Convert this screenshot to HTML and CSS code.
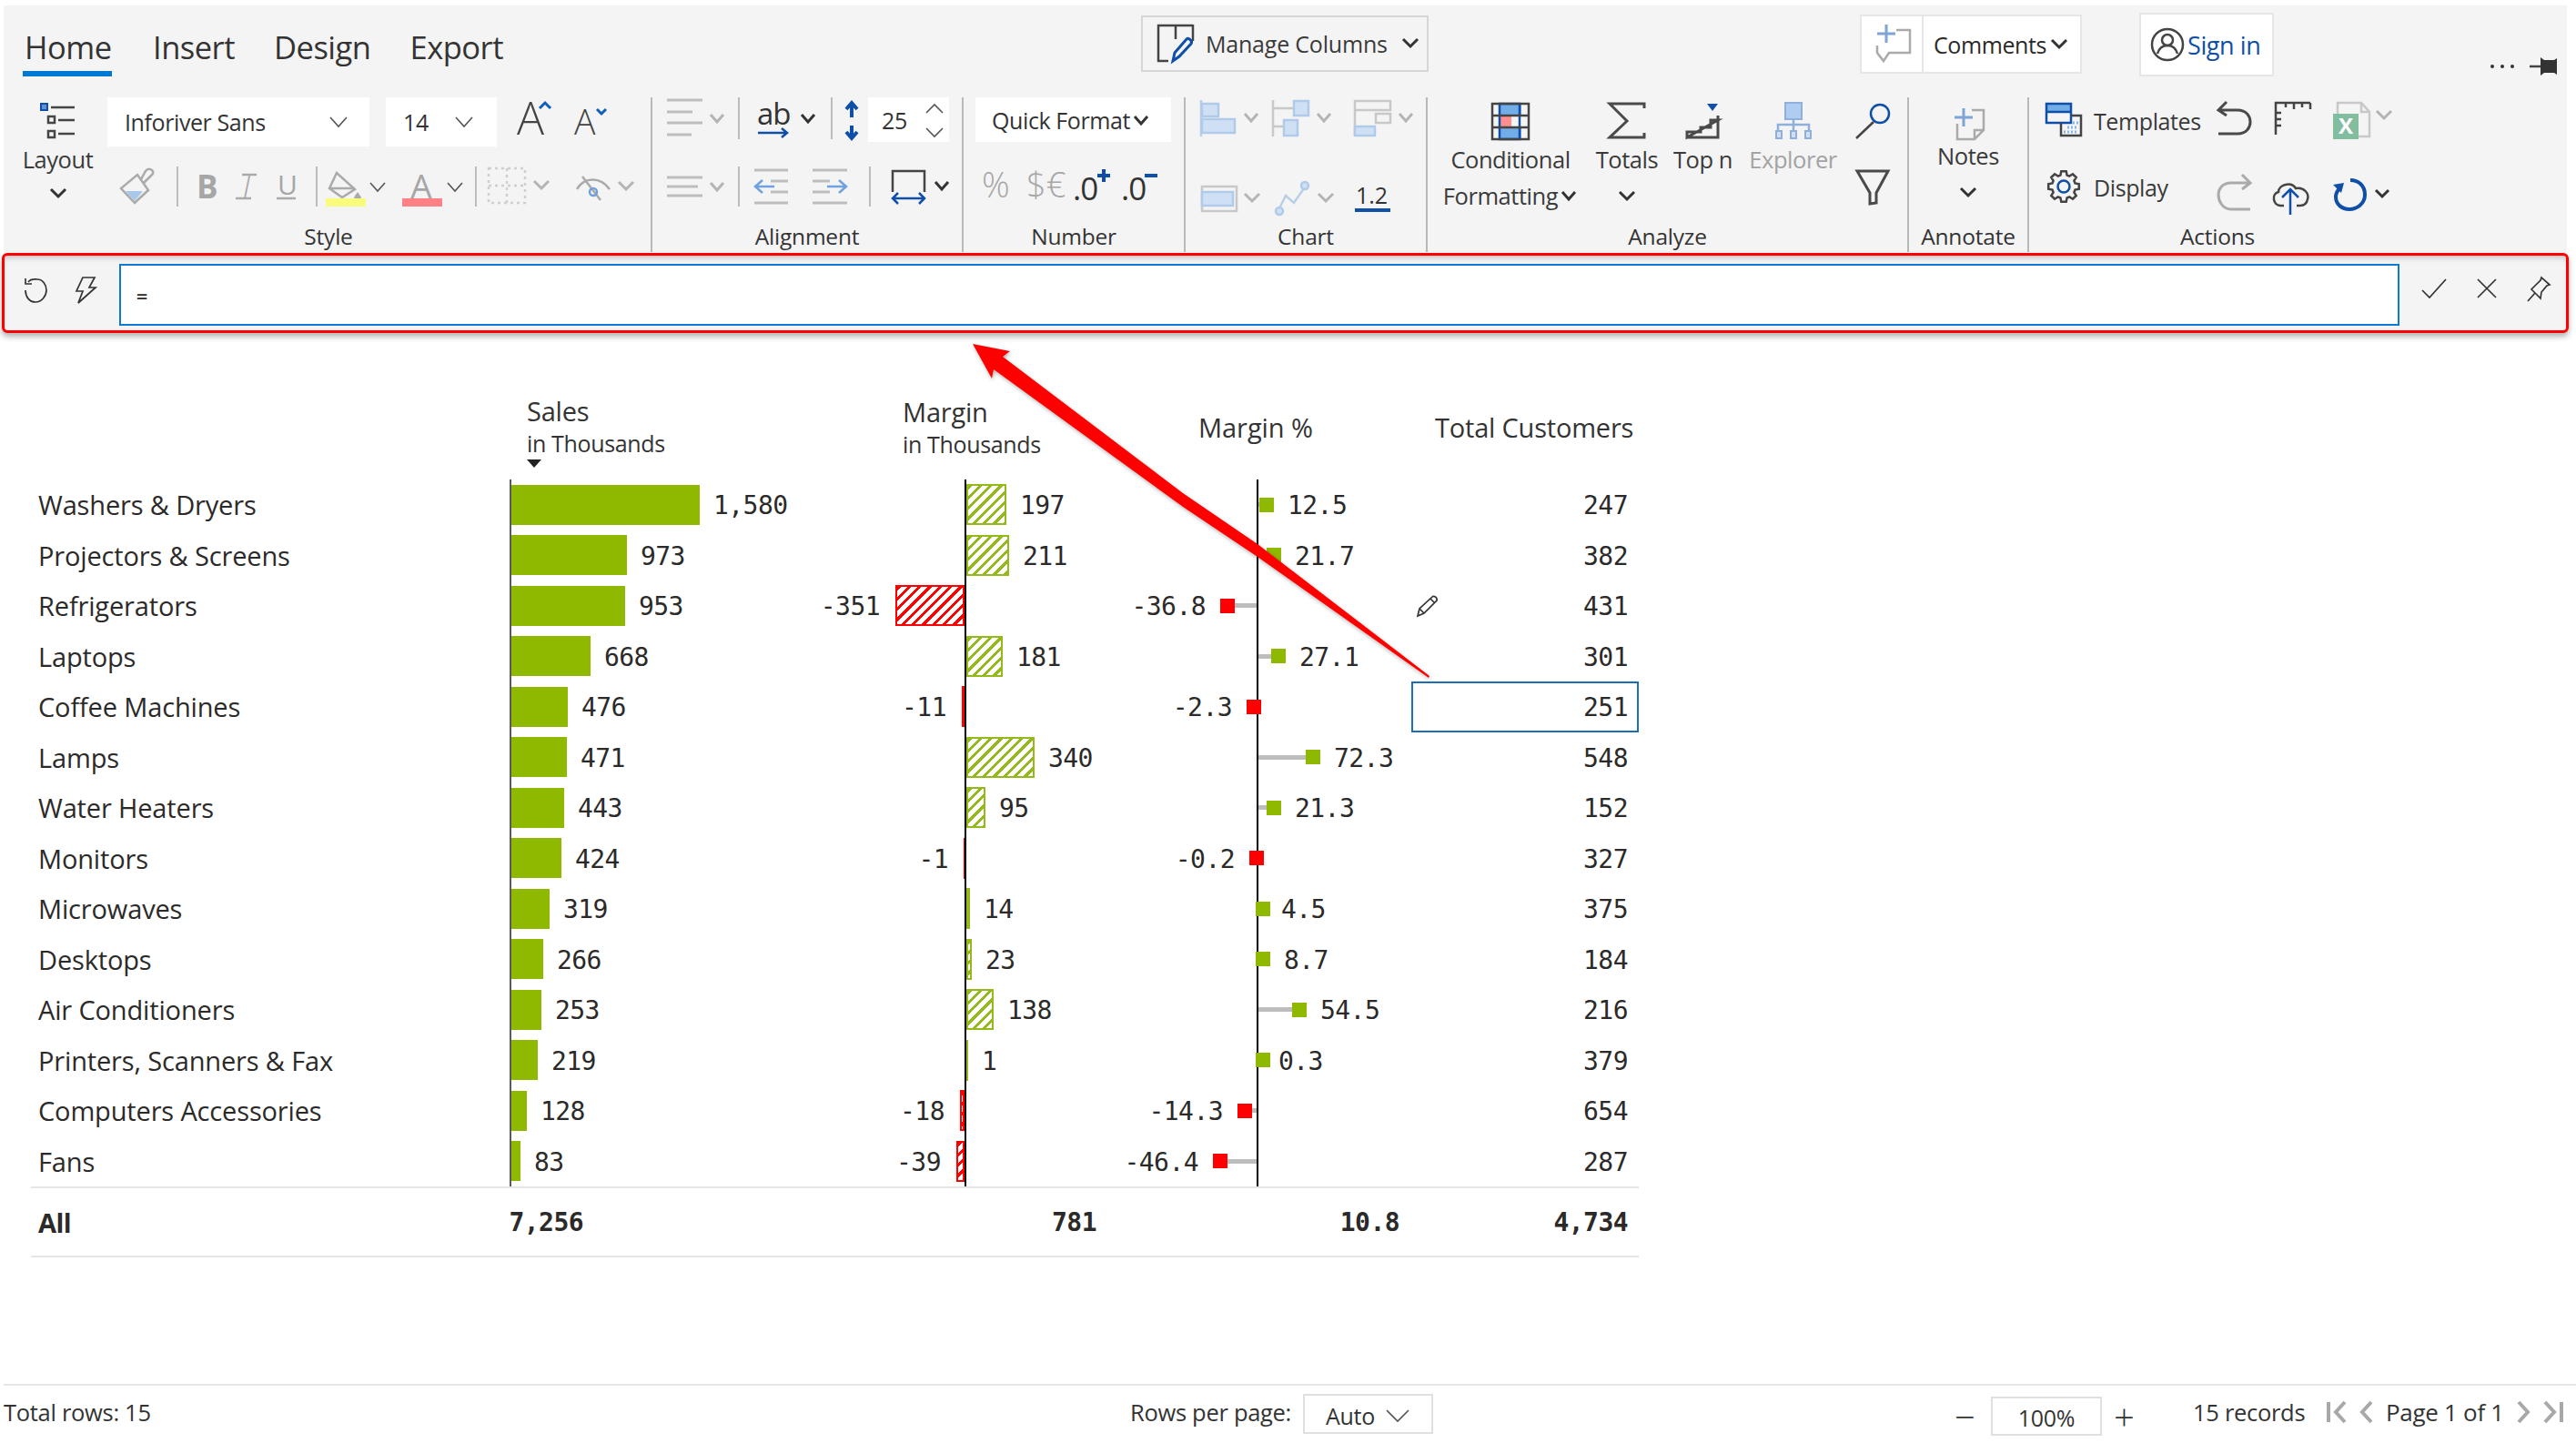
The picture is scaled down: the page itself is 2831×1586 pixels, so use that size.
FILE: index.html
```html
<!DOCTYPE html>
<html lang="en">
<head>
<meta charset="utf-8">
<title>Inforiver</title>
<link rel="stylesheet" href="styles.css">
</head>
<body>
<div class="page">
<header class="ribbon">
  <div class="topbar">
    <nav class="tabs">
      <span class="tab active">Home</span><span class="tab">Insert</span><span class="tab">Design</span><span class="tab">Export</span>
    </nav>
    <div class="manage">
      <svg width="40" height="42" viewBox="0 0 40 42"><path class="ln-dark" d="M0 1H39M1 0V40H12M39 0V18M20 0V16"/><path class="ln-blue" d="M17 40l2-9L32 16c2-2 7 2 5 5L24 35z"/></svg>
      <span>Manage Columns</span>
      <svg width="24" height="20" viewBox="0 0 24 20"><path class="chev-bold" d="M4 5l8 8 8-8"/></svg>
    </div>
    <div class="comments">
      <span class="comments-ic"><svg width="60" height="56" viewBox="0 0 60 56"><path class="ln-gray" d="M36 13H51V38H28L22 47 15 38V30"/><path class="ln-paleblue" d="M25 7V27M15 17H35"/></svg></span>
      <span class="comments-tx">Comments<svg width="24" height="20" viewBox="0 0 24 20"><path class="chev-bold" d="M4 5l8 8 8-8"/></svg></span>
    </div>
    <div class="signin">
      <svg width="38" height="38" viewBox="0 0 38 38"><circle class="ln-dark" cx="19" cy="19" r="17"/><circle class="ln-dark" cx="19" cy="14" r="6"/><path class="ln-dark" d="M8 29c2-7 6-9 11-9s9 2 11 9"/></svg>
      <span>Sign in</span>
    </div>
    <div class="pinbar">
      <svg width="26" height="22" viewBox="0 0 26 22"><circle class="fill-dark" cx="2" cy="11" r="2"/><circle class="fill-dark" cx="13" cy="11" r="2"/><circle class="fill-dark" cx="24" cy="11" r="2"/></svg>
      <svg width="32" height="22" viewBox="0 0 32 22"><path class="ln-dark" d="M0 11H14"/><path class="fill-dark" d="M12 1l4 3H27l3-2V20l-3-2H16l-4 3z"/></svg>
    </div>
  </div>
  <div class="groups">
    <section class="group g-style">
      <div class="tools tools-row">
        <div class="layout-btn">
          <svg width="40" height="42" viewBox="0 0 40 42"><rect class="sq-blue" x="1" y="1" width="7" height="7"/><path class="ln-dark" d="M12 5H38M20 19H38M20 34H38"/><rect class="ln-dark" x="9" y="15" width="7" height="7"/><rect class="ln-dark" x="9" y="31" width="7" height="7"/></svg>
          <span class="big-label">Layout</span>
          <svg width="24" height="20" viewBox="0 0 24 20"><path class="chev-bold" d="M4 5l8 8 8-8"/></svg>
        </div>
        <div class="tool-rows">
          <div class="rt">
            <div class="select s-font"><span>Inforiver Sans</span><svg width="24" height="20" viewBox="0 0 24 20"><path class="chev-thin" d="M3 5l9 10 9-10"/></svg></div>
            <div class="select s-size"><span>14</span><svg width="24" height="20" viewBox="0 0 24 20"><path class="chev-thin" d="M3 5l9 10 9-10"/></svg></div>
            <svg class="a-ic" width="125" height="48" viewBox="0 0 125 48"><text class="t-a1" x="20" y="41">A</text><path class="caret-blue" d="M45 12l6-6 6 6"/><text class="t-a2" x="83" y="41">A</text><path class="caret-blue" d="M108 13l5 5 5-5"/></svg>
          </div>
          <div class="rb">
            <svg width="76" height="60" viewBox="0 0 76 60"><path class="fill-pale" d="M20 27H39L30 38z"/><path class="ln-gray" d="M30 40L15 24 33 9 45 26zM37 14L42 5Q45 1 49 4 52 7 48 10L40 18"/></svg>
            <span class="sep"></span>
            <svg width="151" height="60" viewBox="0 0 151 60"><text class="t-dis t-b" x="20" y="35">B</text><text class="t-dis t-i" x="75" y="34">I</text><text class="t-dis t-u" x="109" y="31">U</text><path class="ln-gray" d="M70 9H86M63 35H80M108 35H129"/></svg>
            <span class="sep"></span>
            <svg width="173" height="60" viewBox="0 0 173 60"><path class="ln-gray" d="M21 7L13 24 27 34 41 25zM13 24H41"/><path class="fill-gray" d="M44 28c2 3 4 5 4 7s-2 2-4 2-4 0-4-2 2-4 4-7z"/><rect class="bar-yellow" x="9" y="35" width="44" height="9"/><path class="chev-thin" d="M58 18l8 9 8-9"/><text class="t-dis t-afont" x="114" y="35" text-anchor="middle">A</text><rect class="bar-red" x="93" y="35" width="44" height="9"/><path class="chev-thin" d="M143 18l8 9 8-9"/></svg>
            <span class="sep"></span>
            <svg width="176" height="60" viewBox="0 0 176 60"><path class="ln-dots" d="M13 2H53V40H13zM33 2V40M13 21H53"/><path class="chev-gray" d="M63 16l8 8 8-8"/><path class="ln-gray" d="M110 25C118 11 136 11 146 25M116 11L136 37"/><circle class="ln-paleblue2" cx="128" cy="28" r="4"/><path class="chev-gray" d="M156 17l8 8 8-8"/></svg>
          </div>
        </div>
      </div>
      <div class="group-label lb-style">Style</div>
    </section>
    <section class="group g-align">
      <div class="tools">
        <div class="rt">
          <svg width="94" height="48" viewBox="0 0 94 48"><path class="ln-gray3" d="M16 3H55M16 16H44M16 28H55M16 41H43"/><path class="chev-gray" d="M64 19l7 8 7-8"/></svg>
          <span class="sep sep-top"></span>
          <svg width="100" height="48" viewBox="0 0 100 48"><text class="t-ab" x="19" y="30">ab</text><path class="ln-blue2" d="M20 39H52M46 34l6 5-6 5"/><path class="chev-bold" d="M68 19l7 8 7-8"/></svg>
          <span class="sep sep-top"></span>
          <svg width="39" height="48" viewBox="0 0 39 48"><path class="ln-blue3" d="M21 8V22M21 31V44M15 13l6-7 6 7M15 38l6 7 6-7"/></svg>
          <div class="spin"><span>25</span><svg width="24" height="46" viewBox="0 0 24 46"><path class="chev-thin" d="M3 15l9-9 9 9M3 32l9 9 9-9"/></svg></div>
        </div>
        <div class="rb">
          <svg width="94" height="60" viewBox="0 0 94 60"><path class="ln-gray3" d="M16 12H55M16 22H50M16 32H55"/><path class="chev-gray" d="M64 18l7 8 7-8"/></svg>
          <span class="sep"></span>
          <svg width="142" height="60" viewBox="0 0 142 60"><path class="ln-gray3" d="M16 4H53M34 16H53M34 28H53M16 40H53M80 4H118M80 16H99M80 28H99M80 40H118"/><path class="ln-midblue" d="M38 22H18M25 15l-8 7 8 7M96 22H116M109 15l8 7-8 7"/></svg>
          <span class="sep"></span>
          <svg width="90" height="60" viewBox="0 0 90 60"><path class="ln-dark" d="M24 28V5H59V28"/><path class="ln-blue2" d="M24 35H59M30 29l-6 6 6 6M53 29l6 6-6 6"/><path class="chev-bold" d="M71 17l7 8 7-8"/></svg>
        </div>
      </div>
      <div class="group-label">Alignment</div>
    </section>
    <section class="group g-number">
      <div class="tools">
        <div class="rt">
          <div class="select s-quick"><span>Quick Format</span><svg width="20" height="20" viewBox="0 0 20 20"><path class="chev-bold" d="M3 6l7 8 7-8"/></svg></div>
        </div>
        <div class="rb">
          <svg width="240" height="60" viewBox="0 0 240 60"><text class="t-dis t-num" x="20" y="34">%</text><text class="t-dis t-num" x="69" y="34">$€</text><text class="t-dec" x="120" y="37">.0</text><path class="ln-blue3" d="M154 3V17M147 10H161"/><text class="t-dec" x="173" y="37">.0</text><path class="ln-blue3" d="M199 10H213"/></svg>
        </div>
      </div>
      <div class="group-label">Number</div>
    </section>
    <section class="group g-chart">
      <div class="tools">
        <div class="rt">
          <svg width="264" height="48" viewBox="0 0 264 48"><path class="ln-pale" d="M17 3V43"/><rect class="box-pale" x="18" y="7" width="18" height="14"/><rect class="box-pale" x="18" y="24" width="36" height="15"/><path class="chev-gray" d="M65 18l7 8 7-8"/><path class="ln-lgray" d="M96 3V43M96 12H119M96 32H108"/><rect class="box-pale" x="119" y="4" width="16" height="16"/><rect class="box-pale" x="108" y="25" width="15" height="17"/><path class="chev-gray" d="M145 18l7 8 7-8"/><path class="ln-lgray" d="M186 4H225V14H186zM186 14V42"/><rect class="ln-lgray" x="209" y="18" width="16" height="10"/><rect class="box-pale" x="186" y="32" width="22" height="10"/><path class="chev-gray" d="M235 18l7 8 7-8"/></svg>
        </div>
        <div class="rb">
          <svg width="264" height="60" viewBox="0 0 264 60"><rect class="ln-lgray" x="18" y="22" width="38" height="27"/><rect class="box-pale" x="18" y="28" width="34" height="15"/><path class="chev-gray" d="M65 30l8 8 8-8"/><path class="ln-pale" d="M103 46L110 32 119 40 130 24"/><circle class="box-pale" cx="103" cy="49" r="4"/><circle class="box-pale" cx="131" cy="21" r="4"/><path class="chev-gray" d="M146 30l8 8 8-8"/><text class="t-onetwo" x="187" y="41">1.2</text><path class="ln-blue3" d="M186 48H225"/></svg>
        </div>
      </div>
      <div class="group-label">Chart</div>
    </section>
    <section class="group g-analyze">
      <div class="tools tools-row">
        <div class="big b-cond">
          <svg width="44" height="49" viewBox="0 0 44 49"><rect class="fill-b" x="10" y="7" width="24" height="13"/><rect class="fill-b" x="10" y="33" width="24" height="13"/><rect class="fill-r" x="10" y="20" width="13" height="13"/><path class="ln-blue2" d="M10 7H32V46H10z"/><path class="ln-dark" d="M2 7H42V46H2zM2 20H42M2 33H42"/></svg>
          <span class="big-label">Conditional</span>
          <span class="big-label">Formatting<svg class="chev-inline" width="20" height="20" viewBox="0 0 20 20"><path class="chev-bold" d="M3 6l7 8 7-8"/></svg></span>
        </div>
        <div class="big b-tot">
          <svg width="44" height="49" viewBox="0 0 44 49"><path class="ln-dark2" d="M41 12V7H3L22 26 3 44H41V39"/></svg>
          <span class="big-label">Totals</span>
          <svg class="chev-row" width="24" height="20" viewBox="0 0 24 20"><path class="chev-bold" d="M4 5l8 8 8-8"/></svg>
        </div>
        <div class="big b-top">
          <svg width="44" height="49" viewBox="0 0 44 49"><path class="fill-blue" d="M26 7H38L32 15z"/><path class="ln-dark2" d="M4 44H38V20M38 25H30V33H19V38H4V44z"/></svg>
          <span class="big-label">Top n</span>
        </div>
        <div class="big b-exp">
          <svg width="44" height="49" viewBox="0 0 44 49"><rect class="box-pale2" x="13" y="6" width="18" height="18"/><path class="ln-pale2" d="M22 24V37M5 37V30H39V37"/><rect class="box-pale3" x="3" y="37" width="6" height="8"/><rect class="box-pale3" x="19" y="37" width="6" height="8"/><rect class="box-pale3" x="35" y="37" width="6" height="8"/></svg>
          <span class="big-label dis">Explorer</span>
        </div>
        <div class="side-tools">
          <svg width="40" height="76" viewBox="0 0 40 76"><circle class="ln-blue2" cx="28" cy="18" r="10"/><path class="ln-dark" d="M21 27L2 45"/></svg>
          <svg width="40" height="44" viewBox="0 0 40 44"><path class="ln-dark2" d="M3 5H37L24 29V40L17 41V29z"/></svg>
        </div>
      </div>
      <div class="group-label">Analyze</div>
    </section>
    <section class="group g-annot">
      <div class="tools big b-notes">
        <svg width="40" height="46" viewBox="0 0 40 46"><path class="ln-gray" d="M24 9H37V31L27 41H8V24M37 31H27V41"/><path class="ln-paleblue" d="M15 7V27M5 17H25"/></svg>
        <span class="big-label">Notes</span>
        <svg class="chev-row" width="24" height="20" viewBox="0 0 24 20"><path class="chev-bold" d="M4 5l8 8 8-8"/></svg>
      </div>
      <div class="group-label">Annotate</div>
    </section>
    <section class="group g-actions">
      <div class="tools">
        <div class="rt">
          <svg width="71" height="48" viewBox="0 0 71 48"><rect class="fill-b" x="19" y="7" width="27" height="9"/><path class="ln-blue2" d="M19 7H46V28H19zM19 16H46"/><path class="ln-dark" d="M35 28V42H57V20H46"/><path class="dots-blue" d="M38 38h16M42 33h12M48 28h6"/></svg>
          <span class="act-text">Templates</span>
          <svg width="209" height="48" viewBox="0 0 209 48"><path class="ln-dark2" d="M1 14H22C32 14 36 21 36 27S32 40 22 40H1M10 5L1 14 10 20"/><path class="ln-dark" d="M64 41V6H102M64 12V6M64 17H70M64 24H70M64 31H70M75 6V11M84 6V13M93 6V11M102 6V13"/><path class="ln-lgray" d="M132 30V6H158L167 16V43H132"/><path class="ln-lgray" d="M158 6V16H167"/><rect class="xl" x="127" y="18" width="28" height="28"/><text class="t-xl" x="141" y="40" text-anchor="middle">X</text><path class="chev-gray" d="M175 15l8 8 8-8"/></svg>
        </div>
        <div class="rb">
          <svg width="71" height="48" viewBox="0 0 71 48"><g transform="translate(20 4)"><path class="ln-dark" d="M15.3 1.2L20.700 1.2 21.600 5.500 24.300 6.600 28 4.250 31.750 8 29.400 11.700 30.500 14.400 34.800 15.300 34.800 20.700 30.500 21.600 29.400 24.300 31.750 28 28 31.750 24.300 29.400 21.600 30.500 20.700 34.800 15.300 34.800 14.400 30.500 11.700 29.400 8 31.750 4.250 28 6.600 24.300 5.500 21.600 1.200 20.700 1.200 15.300 5.500 14.400 6.600 11.700 4.250 8 8 4.250 11.700 6.600 14.400 5.500z"/><circle class="ln-blue2" cx="18" cy="18" r="6.500"/></g></svg>
          <span class="act-text act-low">Display</span>
          <svg width="209" height="60" viewBox="0 0 209 60"><path class="ln-lgray2" d="M36 18H15C5 18 1 25 1 31S5 47 15 47H36M27 9L36 18 27 25"/><g transform="translate(5 0)"><path class="ln-dark" d="M68 43H64C56 43 54 30 62 28 62 20 76 16 81 24 90 22 96 30 94 36 93 41 90 43 86 43H82"/><path class="ln-blue2" d="M75 53V26M66 34l9-9 9 9"/></g><path class="ln-blue-arc" d="M136 22C132 26 130 30 130 33 130 42 137 47 145 47S162 41 162 31 155 15 146 15"/><path class="fill-blue" d="M127 20L139 18 136 29z"/><path class="chev-bold" d="M174 26l7 7 7-7"/></svg>
        </div>
      </div>
      <div class="group-label">Actions</div>
    </section>
  </div>
</header>

<div class="formula">
  <div class="f-left">
    <svg width="26" height="30" viewBox="0 0 26 30"><path class="ln-thin" d="M5 6C8 2 12 3 15 3 21 3 25 9 25 15S20 28 13 28 2 22 2 15M2 2V8H9"/></svg>
    <svg width="24" height="30" viewBox="0 0 24 30"><path class="ln-thin" d="M9 1H22L16 12H23L4 29 9 16H2z"/></svg>
  </div>
  <div class="f-input">=</div>
  <div class="f-right">
    <svg width="28" height="22" viewBox="0 0 28 22"><path class="ln-thin" d="M1 13L9 21 27 1"/></svg>
    <svg width="22" height="22" viewBox="0 0 22 22"><path class="ln-thin" d="M1 1L21 21M21 1L1 21"/></svg>
    <svg width="26" height="28" viewBox="0 0 26 28"><path class="ln-thin" d="M1 27L9 18M5 14L9 18 15 24 16 17 22 10 25 9 16 1 15 4 9 10z"/></svg>
  </div>
</div>

<main class="report">
  <div class="thead">
    <div class="th th-sales">Sales<small>in Thousands</small><i class="sort"></i></div>
    <div class="th th-margin">Margin<small>in Thousands</small></div>
    <div class="th th-pct">Margin %</div>
    <div class="th th-cust">Total Customers</div>
  </div>
  <div class="tbody">
    <div class="row"><div class="c-name">Washers &amp; Dryers</div><div class="c-sales"><i class="bar" style="width:207px"></i><span class="num">1,580</span></div><div class="c-neg"></div><div class="c-pos"><i class="hb good" style="width:44px"></i><span class="num">197</span></div><div class="c-pneg"></div><div class="c-ppos"><i class="stem" style="width:1px"></i><i class="mark good"></i><span class="num">12.5</span></div><div class="c-cust"><span class="num">247</span></div></div>
    <div class="row"><div class="c-name">Projectors &amp; Screens</div><div class="c-sales"><i class="bar" style="width:127px"></i><span class="num">973</span></div><div class="c-neg"></div><div class="c-pos"><i class="hb good" style="width:47px"></i><span class="num">211</span></div><div class="c-pneg"></div><div class="c-ppos"><i class="stem" style="width:9px"></i><i class="mark good"></i><span class="num">21.7</span></div><div class="c-cust"><span class="num">382</span></div></div>
    <div class="row"><div class="c-name">Refrigerators</div><div class="c-sales"><i class="bar" style="width:125px"></i><span class="num">953</span></div><div class="c-neg"><span class="num">-351</span><i class="hb bad" style="width:76px"></i></div><div class="c-pos"></div><div class="c-pneg"><span class="num">-36.8</span><i class="mark bad"></i><i class="stem" style="width:24px"></i></div><div class="c-ppos"></div><div class="c-cust"><svg class="pencil" width="24" height="26" viewBox="0 0 24 26"><path class="ln-thin" d="M1 24L3 16 17 3C19 1 23 4 22 7L8 21zM3 16L8 21M15 5L20 10"/></svg><span class="num">431</span></div></div>
    <div class="row"><div class="c-name">Laptops</div><div class="c-sales"><i class="bar" style="width:87px"></i><span class="num">668</span></div><div class="c-neg"></div><div class="c-pos"><i class="hb good" style="width:40px"></i><span class="num">181</span></div><div class="c-pneg"></div><div class="c-ppos"><i class="stem" style="width:14px"></i><i class="mark good"></i><span class="num">27.1</span></div><div class="c-cust"><span class="num">301</span></div></div>
    <div class="row"><div class="c-name">Coffee Machines</div><div class="c-sales"><i class="bar" style="width:62px"></i><span class="num">476</span></div><div class="c-neg"><span class="num">-11</span><i class="hb bad thin" style="width:3px"></i></div><div class="c-pos"></div><div class="c-pneg"><span class="num">-2.3</span><i class="mark bad" style="margin-right:-5px"></i></div><div class="c-ppos"></div><div class="c-cust selected"><span class="num">251</span></div></div>
    <div class="row"><div class="c-name">Lamps</div><div class="c-sales"><i class="bar" style="width:61px"></i><span class="num">471</span></div><div class="c-neg"></div><div class="c-pos"><i class="hb good" style="width:75px"></i><span class="num">340</span></div><div class="c-pneg"></div><div class="c-ppos"><i class="stem" style="width:52px"></i><i class="mark good"></i><span class="num">72.3</span></div><div class="c-cust"><span class="num">548</span></div></div>
    <div class="row"><div class="c-name">Water Heaters</div><div class="c-sales"><i class="bar" style="width:58px"></i><span class="num">443</span></div><div class="c-neg"></div><div class="c-pos"><i class="hb good" style="width:21px"></i><span class="num">95</span></div><div class="c-pneg"></div><div class="c-ppos"><i class="stem" style="width:9px"></i><i class="mark good"></i><span class="num">21.3</span></div><div class="c-cust"><span class="num">152</span></div></div>
    <div class="row"><div class="c-name">Monitors</div><div class="c-sales"><i class="bar" style="width:55px"></i><span class="num">424</span></div><div class="c-neg"><span class="num">-1</span><i class="hb bad thin" style="width:1px"></i></div><div class="c-pos"></div><div class="c-pneg"><span class="num">-0.2</span><i class="mark bad" style="margin-right:-8px"></i></div><div class="c-ppos"></div><div class="c-cust"><span class="num">327</span></div></div>
    <div class="row"><div class="c-name">Microwaves</div><div class="c-sales"><i class="bar" style="width:42px"></i><span class="num">319</span></div><div class="c-neg"></div><div class="c-pos"><i class="hb good thin" style="width:4px"></i><span class="num">14</span></div><div class="c-pneg"></div><div class="c-ppos"><i class="mark good" style="margin-left:-3px"></i><span class="num" style="margin-left:12px">4.5</span></div><div class="c-cust"><span class="num">375</span></div></div>
    <div class="row"><div class="c-name">Desktops</div><div class="c-sales"><i class="bar" style="width:35px"></i><span class="num">266</span></div><div class="c-neg"></div><div class="c-pos"><i class="hb good" style="width:6px"></i><span class="num">23</span></div><div class="c-pneg"></div><div class="c-ppos"><i class="mark good" style="margin-left:-3px"></i><span class="num">8.7</span></div><div class="c-cust"><span class="num">184</span></div></div>
    <div class="row"><div class="c-name">Air Conditioners</div><div class="c-sales"><i class="bar" style="width:33px"></i><span class="num">253</span></div><div class="c-neg"></div><div class="c-pos"><i class="hb good" style="width:30px"></i><span class="num">138</span></div><div class="c-pneg"></div><div class="c-ppos"><i class="stem" style="width:37px"></i><i class="mark good"></i><span class="num">54.5</span></div><div class="c-cust"><span class="num">216</span></div></div>
    <div class="row"><div class="c-name">Printers, Scanners &amp; Fax</div><div class="c-sales"><i class="bar" style="width:29px"></i><span class="num">219</span></div><div class="c-neg"></div><div class="c-pos"><i class="hb good thin" style="width:2px"></i><span class="num">1</span></div><div class="c-pneg"></div><div class="c-ppos"><i class="mark good" style="margin-left:-3px"></i><span class="num" style="margin-left:9px">0.3</span></div><div class="c-cust"><span class="num">379</span></div></div>
    <div class="row"><div class="c-name">Computers Accessories</div><div class="c-sales"><i class="bar" style="width:17px"></i><span class="num">128</span></div><div class="c-neg"><span class="num">-18</span><i class="hb bad" style="width:5px"></i></div><div class="c-pos"></div><div class="c-pneg"><span class="num">-14.3</span><i class="mark bad"></i><i class="stem" style="width:5px"></i></div><div class="c-ppos"></div><div class="c-cust"><span class="num">654</span></div></div>
    <div class="row"><div class="c-name">Fans</div><div class="c-sales"><i class="bar" style="width:10px"></i><span class="num">83</span></div><div class="c-neg"><span class="num">-39</span><i class="hb bad" style="width:9px"></i></div><div class="c-pos"></div><div class="c-pneg"><span class="num">-46.4</span><i class="mark bad"></i><i class="stem" style="width:32px"></i></div><div class="c-ppos"></div><div class="c-cust"><span class="num">287</span></div></div>
  </div>
  <div class="tfoot">
    <div class="tf-name">All</div>
    <div class="tf-num">7,256</div>
    <div class="tf-num">781</div>
    <div class="tf-num">10.8</div>
    <div class="tf-num">4,734</div>
  </div>
</main>

<footer class="status">
  <span>Total rows: 15</span>
  <span>Rows per page:</span>
  <div class="auto"><span>Auto</span><svg width="30" height="18" viewBox="0 0 30 18"><path class="chev-thin" d="M3 3l12 12L27 3"/></svg></div>
  <div class="zoomer">
    <span class="z-sign z-minus">−</span>
    <span class="z-box">100%</span>
    <span class="z-sign">+</span>
  </div>
  <span>15 records</span>
  <div class="pager">
    <svg width="24" height="26" viewBox="0 0 24 26"><path class="ln-pager" d="M2 2V24M20 2L10 13 20 24"/></svg>
    <svg width="16" height="26" viewBox="0 0 16 26"><path class="ln-pager" d="M13 2L3 13 13 24"/></svg>
    <span>Page 1 of 1</span>
    <svg width="16" height="26" viewBox="0 0 16 26"><path class="ln-pager" d="M3 2L13 13 3 24"/></svg>
    <svg width="24" height="26" viewBox="0 0 24 26"><path class="ln-pager" d="M4 2L14 13 4 24M22 2V24"/></svg>
  </div>
</footer>
</div>

<svg class="arrow" width="520" height="380" viewBox="0 0 520 380"><path class="arrow-shape" d="M9 8L50 16 42 22 240 172 322 228 511 373 510 375 322 242 240 187 32 36 30 46z"/></svg>
</body>
</html>
```

FILE: styles.css
```css
* { box-sizing: border-box; }
html, body { margin: 0; padding: 0; }
body { background: #fff; color: #2b2a29; font-family: "Open Sans", "Noto Sans", sans-serif; position: relative; overflow: hidden; }
svg { display: block; flex: none; overflow: visible; }
svg text { font-family: "Open Sans", sans-serif; }
i { display: block; font-style: normal; }

.page { display: flex; flex-direction: column; height: 1586px; padding-top: 6px; }

/* ribbon */
.ribbon { margin-left: 4px; width: 2817px; height: 272px; background: #f4f4f4; flex: none; }
.topbar { display: grid; grid-template-columns: 1250px 790px 307px 386px 1fr; height: 101px; align-items: start; }
.tabs { display: flex; padding-left: 21px; }
.tab { font-size: 34.500px; line-height: 46px; margin-top: 23px; margin-right: 43px; letter-spacing: -.5px; color: #333; }
.tab.active { font-weight: 500; color: #333; border-bottom: 6px solid #0078d4; width: 98px; height: 55px; padding: 0 0 0 2px; margin-right: 45px; }
.manage { margin-top: 11px; width: 316px; height: 62px; border: 2px solid #d6d6d6; display: flex; align-items: center; padding-left: 16px; gap: 13px; font-size: 25px; letter-spacing: -.2px; color: #3a3a3a; }
.comments { margin-top: 10px; width: 244px; height: 65px; border: 2px solid #e6e6e6; background: #fff; display: flex; font-size: 25px; letter-spacing: -.4px; }
.comments-ic { width: 68px; border-right: 2px solid #e6e6e6; padding: 2px 0 0 2px; }
.comments-tx { display: flex; align-items: center; padding-left: 11px; gap: 2px; }
.signin { margin-top: 8px; width: 148px; height: 70px; border: 2px solid #e6e6e6; background: #fff; display: flex; align-items: center; padding-left: 10px; gap: 3px; font-size: 27px; font-weight: 500; letter-spacing: -.4px; color: #0f4fa8; }
.pinbar { display: flex; align-items: flex-start; margin-top: 56px; gap: 17px; }

.groups { display: flex; height: 170px; }
.group { display: flex; flex-direction: column; height: 170px; border-right: 2px solid #b9b9b9; flex: none; }
.g-style { width: 713px; }
.g-align { width: 342px; }
.g-number { width: 244px; }
.g-chart { width: 266px; }
.g-analyze { width: 529px; }
.g-annot { width: 132px; }
.g-actions { width: 414px; border-right: 0; }
.group-label { margin-top: auto; text-align: center; line-height: 30px; height: 32px; font-size: 24.500px; font-weight: 500; letter-spacing: -.2px; color: #333; }
.lb-style { padding-left: 3px; }
.tools-row { display: flex; }
.tool-rows { flex: none; }
.rt { display: flex; height: 48px; margin-bottom: 28px; align-items: flex-start; }
.rb { display: flex; height: 60px; align-items: flex-start; }
.sep { display: block; width: 2px; height: 44px; background: #bdbdbd; flex: none; }
.sep-top { height: 46px; }

.layout-btn { width: 114px; padding: 6px 0 0 5px; display: flex; flex-direction: column; align-items: center; flex: none; }
.big-label { font-size: 25.500px; line-height: 40px; letter-spacing: -.45px; color: #3a3a3a; white-space: nowrap; display: flex; align-items: center; margin-top: -1px; }
.big-label + .big-label { margin-top: 0; }
.big-label.dis { color: #a3a3a3; }
.layout-btn .big-label { margin-top: 0; }
.layout-btn svg:last-child { margin-top: 8px; }
.select { height: 54px; background: #fff; display: flex; align-items: center; font-size: 25px; letter-spacing: -.4px; color: #333; flex: none; }
.s-font { width: 288px; padding-left: 19px; justify-content: space-between; padding-right: 22px; margin-right: 18px; }
.s-size { width: 122px; padding-left: 19px; justify-content: space-between; padding-right: 24px; margin-right: 2px; }
.s-quick { width: 215px; height: 49px; margin-left: 13px; padding-left: 18px; gap: 2px; }
.spin { width: 89px; height: 49px; background: #fff; display: flex; align-items: center; justify-content: space-between; padding: 0 4px 0 15px; font-size: 25px; letter-spacing: -.4px; color: #333; flex: none; }

/* svg strokes */
.ln-dark, .ln-dark2, .ln-gray, .ln-gray3, .ln-blue, .ln-blue2, .ln-blue3, .ln-paleblue, .ln-paleblue2, .ln-midblue, .ln-pale, .ln-pale2, .ln-lgray, .ln-lgray2, .ln-thin, .ln-dots, .ln-pager, .ln-blue-arc, .chev-bold, .chev-thin, .chev-gray, .caret-blue { fill: none; }
.ln-dark { stroke: #444; stroke-width: 2.5; }
.ln-dark2 { stroke: #4a4a4a; stroke-width: 3; }
.ln-gray { stroke: #aaa; stroke-width: 2.5; }
.ln-gray3 { stroke: #bdbdbd; stroke-width: 3; }
.ln-blue { stroke: #0f4fa8; stroke-width: 3; }
.ln-blue2 { stroke: #0f4fa8; stroke-width: 2.5; }
.ln-blue3 { stroke: #0f4fa8; stroke-width: 4; }
.ln-blue-arc { stroke: #0f4fa8; stroke-width: 4; }
.ln-paleblue { stroke: #7fa4d6; stroke-width: 3; }
.ln-paleblue2 { stroke: #6f9fdc; stroke-width: 2.5; }
.ln-midblue { stroke: #6ea3dd; stroke-width: 2.5; }
.ln-pale { stroke: #b9cfe8; stroke-width: 2.5; }
.ln-pale2 { stroke: #8fb0dc; stroke-width: 2.5; }
.ln-lgray { stroke: #c8c8c8; stroke-width: 2.5; }
.ln-lgray2 { stroke: #aaa; stroke-width: 3; }
.ln-thin { stroke: #333; stroke-width: 1.7; }
.ln-dots { stroke: #cfcfcf; stroke-width: 2.5; stroke-dasharray: 3 4; }
.ln-pager { stroke: #a8a8a8; stroke-width: 4; }
.chev-bold { stroke: #333; stroke-width: 3; }
.chev-thin { stroke: #555; stroke-width: 1.6; }
.chev-gray { stroke: #b4b4b4; stroke-width: 3; }
.caret-blue { stroke: #0f5fb8; stroke-width: 3; }
.fill-dark { fill: #333; }
.fill-gray { fill: #aaa; }
.fill-pale { fill: #a8c8ea; }
.fill-blue { fill: #0f4fa8; }
.fill-b { fill: #73ade8; }
.fill-r { fill: #ff8f8f; }
.sq-blue { fill: #5b93d6; stroke: #0f4fa8; stroke-width: 2; }
.bar-yellow { fill: #f8fb7c; }
.bar-red { fill: #ff8085; }
.box-pale { fill: #cfe0f4; stroke: #b0cbe9; stroke-width: 2.5; }
.box-pale2 { fill: #aecdf0; stroke: #8fb0dc; stroke-width: 2; }
.box-pale3 { fill: #cfe0f4; stroke: #8fb0dc; stroke-width: 2; }
.xl { fill: #82bd9f; }
.dots-blue { fill: none; stroke: #8ab6e6; stroke-width: 3; stroke-dasharray: 2 2; }

.t-a1 { font-size: 50px; fill: #444; font-weight: 300; }
.t-a2 { font-size: 39px; fill: #444; font-weight: 300; }
.t-dis { fill: #a6a6a6; }
.t-b { font-size: 35px; font-weight: 700; }
.t-i { font-size: 34px; font-style: italic; text-anchor: middle; font-weight: 300; }
.t-u { font-size: 30px; }
.t-afont { font-size: 37px; }
.t-ab { font-size: 33px; fill: #333; letter-spacing: -1px; }
.t-num { font-size: 38px; font-weight: 300; }
.t-dec { font-size: 35px; fill: #333; letter-spacing: -1px; }
.t-onetwo { font-size: 25px; fill: #333; }
.t-xl { font-size: 24px; font-weight: 700; fill: #fff; }

.big { display: flex; flex-direction: column; align-items: center; flex: none; }
.b-cond { width: 182px; }
.b-tot { width: 74px; }
.b-top { width: 93px; }
.b-exp { width: 105px; }
.b-notes { width: 130px; padding-top: 5px; }
.b-notes .big-label { margin-top: -7px; }
.b-notes .chev-row { margin-top: 11px; }
.chev-row { margin-top: 11px; }
.chev-inline { margin-left: 2px; }
.side-tools { width: 68px; padding-left: 15px; }
.act-text { width: 136px; font-size: 25px; line-height: 52px; letter-spacing: -.4px; color: #3a3a3a; flex: none; }
.act-low { line-height: 46px; }

/* formula bar */
.formula { margin-left: 2px; width: 2821px; height: 88px; flex: none; border: 3px solid #f00; border-radius: 6px; display: flex; background: #f4f4f4; box-shadow: 0 4px 6px rgba(0,0,0,.3), inset 0 6px 6px -4px rgba(0,0,0,.22); padding-top: 9px; position: relative; }
.f-left { width: 126px; display: flex; gap: 30px; padding: 14px 0 0 21px; flex: none; }
.f-input { width: 2506px; height: 68px; background: #fff; border: 2px solid #0f78d4; font-family: "DejaVu Sans Mono", monospace; font-size: 20px; line-height: 66px; padding-left: 17px; flex: none; }
.f-right { flex: 1; display: flex; align-items: flex-start; padding: 16px 0 0 24px; gap: 33px; }
.f-right svg:last-child { margin-top: -2px; }

/* report */
.report { margin-left: 34px; width: 1767px; flex: none; }
.thead { display: grid; grid-template-columns: 526px 432px 325px 260px 224px; height: 161px; font-size: 29px; line-height: 36px; letter-spacing: -.2px; color: #333; }
.th small { display: block; font-size: 25px; line-height: 35px; letter-spacing: -.35px; }
.th-sales { grid-column: 2; padding: 68px 0 0 19px; position: relative; }
.th-margin { padding: 69px 0 0 0; }
.th-pct { padding: 86px 0 0 0; letter-spacing: -.05px; }
.th-cust { padding: 86px 7px 0 0; text-align: right; white-space: nowrap; }
.sort { width: 0; height: 0; border: 8px solid transparent; border-top: 9px solid #222; border-bottom: 0; }

.tbody { display: grid; grid-template-columns: 526px 290px 210px 122px 199px 170px 250px; grid-auto-rows: 55.5px; }
.row { display: contents; }
.row > div { display: flex; align-items: center; }
.c-name { font-size: 29px; letter-spacing: -.15px; padding-left: 8px; color: #2b2a29; white-space: nowrap; }
.c-sales { border-left: 2px solid #5a5a5a; }
.c-neg, .c-pneg { justify-content: flex-end; }
.c-pos, .c-ppos { border-left: 2px solid #000; }
.c-cust { justify-content: space-between; padding: 0 12px 0 6px; }
.row > .c-cust > .num:only-child { margin-left: auto; }
.selected { box-shadow: inset 0 0 0 2px #1b6db5; }
.num { font-family: "DejaVu Sans Mono", monospace; font-size: 28px; letter-spacing: -.55px; padding-top: 2px; color: #2b2a29; white-space: nowrap; }
.bar { height: 44px; background: #8fb800; margin-right: 15px; flex: none; }
.hb { height: 45px; flex: none; border: 2px solid; }
.hb.good { border-color: #93b91a; background: repeating-linear-gradient(135deg, #93b91a 0 3px, #fff 3px 8px); margin-right: 15px; }
.hb.bad { border-color: #f00; background: repeating-linear-gradient(135deg, #f00 0 3px, #fff 3px 8px); }
.hb.thin { border: 0; }
.hb.good.thin { background: #93b91a; }
.hb.bad.thin { background: #f00; }
.c-neg .num { margin-right: 17px; }
.stem { height: 5px; background: #bdbdbd; flex: none; }
.mark { width: 16px; height: 16px; flex: none; position: relative; z-index: 1; }
.mark.good { background: #8fb800; }
.mark.bad { background: #f00; }
.c-ppos .num { margin-left: 15px; }
.c-pneg .num { margin-right: 16px; }

.tfoot { display: grid; grid-template-columns: 521px 86px 564px 333px 251px; height: 78px; align-items: center; border-top: 2px solid #e6e6e6; border-bottom: 2px solid #e6e6e6; }
.tf-name { font-size: 29px; font-weight: 700; padding-left: 8px; letter-spacing: -.5px; }
.tf-num { font-family: "DejaVu Sans Mono", monospace; font-weight: 700; font-size: 28px; letter-spacing: -.55px; text-align: right; }

/* status */
.status { margin-top: auto; height: 65px; flex: none; border-top: 2px solid #e6e6e6; margin-left: 4px; display: grid; grid-template-columns: 1238px 190px 716px 262px 147px 1fr; align-items: start; padding-top: 9px; font-size: 25.500px; line-height: 40px; letter-spacing: -.3px; color: #333; }
.auto { width: 143px; height: 44px; border: 2px solid #e0e0e0; display: flex; align-items: center; gap: 10px; padding: 3px 0 0 23px; font-size: 25px; }
.zoomer { display: flex; align-items: center; margin-top: 3px; }
.z-sign { width: 40px; font-size: 40px; line-height: 38px; font-weight: 300; color: #333; }
.z-box { width: 122px; height: 43px; border: 2px solid #e0e0e0; text-align: center; font-size: 25px; line-height: 42px; margin-right: 13px; }
.pager { display: flex; align-items: center; gap: 12px; font-size: 26px; }
.pager span { margin: 0 1px; }

/* annotation arrow laid over the report */
.arrow { position: absolute; left: 1060px; top: 370px; z-index: 5; filter: drop-shadow(1px 2px 2px rgba(0,0,0,.3)); }
.arrow-shape { fill: #f00; }
```
